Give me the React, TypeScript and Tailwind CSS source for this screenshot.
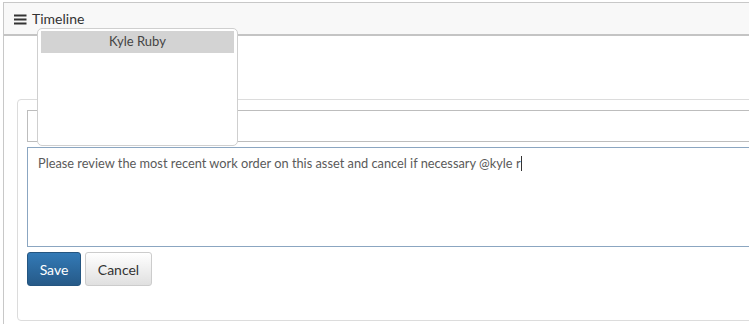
import React from "react";

export default function App() {
  const font = { fontFamily: "Lato, 'Open Sans', sans-serif" };
  return (
    <div className="relative w-[749px] h-[324px] overflow-hidden bg-white" style={font}>
      <div className="pl-[3px] pt-[2px]">
        <div className="w-[800px] border border-[#c8c8c8] bg-white">
          <div className="h-[33px] bg-[#f8f8f8] border-b-2 border-[#c4c4c4] flex items-center pl-[10px] gap-[5px] text-[14px] text-[#333]">
            <svg width="13" height="11" viewBox="0 0 13 11" className="mt-[1px]">
              <rect x="0" y="0.5" width="12.5" height="2" fill="#333" />
              <rect x="0" y="4.5" width="12.5" height="2" fill="#333" />
              <rect x="0" y="8.5" width="12.5" height="2" fill="#333" />
            </svg>
            <span>Timeline</span>
          </div>
          <div className="pl-[13px] pt-[63px] pb-[20px]">
            <div className="rounded-[4px] border border-[#dcdcdc] pl-[9px] pt-[10px] pb-[34px]">
              <div className="h-[32px] border border-[#bdbdbd] bg-white" />
              <div className="mt-[5px] h-[100px] border border-[#8ba6c1] bg-white px-[10px] pt-[6px] text-[12.8px] text-[#5a5a5a]">
                Please review the most recent work order on this asset and cancel if necessary @kyle r
                <span className="inline-block w-[1px] h-[15px] bg-[#333] align-[-3px]" />
              </div>
              <div className="mt-[5px] flex gap-[4px]">
                <button className="w-[54px] h-[34px] rounded-[3px] border border-[#245580] bg-gradient-to-b from-[#337ab7] to-[#265a88] text-white text-[14px]">
                  Save
                </button>
                <button className="w-[67px] h-[34px] rounded-[3px] border border-[#ccc] bg-gradient-to-b from-white to-[#e0e0e0] text-[#333] text-[14px]">
                  Cancel
                </button>
              </div>
            </div>
          </div>
        </div>
      </div>
      <div className="absolute left-[37px] top-[28px] w-[201px] h-[118px] rounded-[5px] border border-[#cfcfcf] bg-white px-[3px] pt-[2px]">
        <div className="h-[22px] bg-[#d3d3d3] flex items-center justify-center text-[13px] text-[#444]">
          Kyle Ruby
        </div>
      </div>
    </div>
  );
}
